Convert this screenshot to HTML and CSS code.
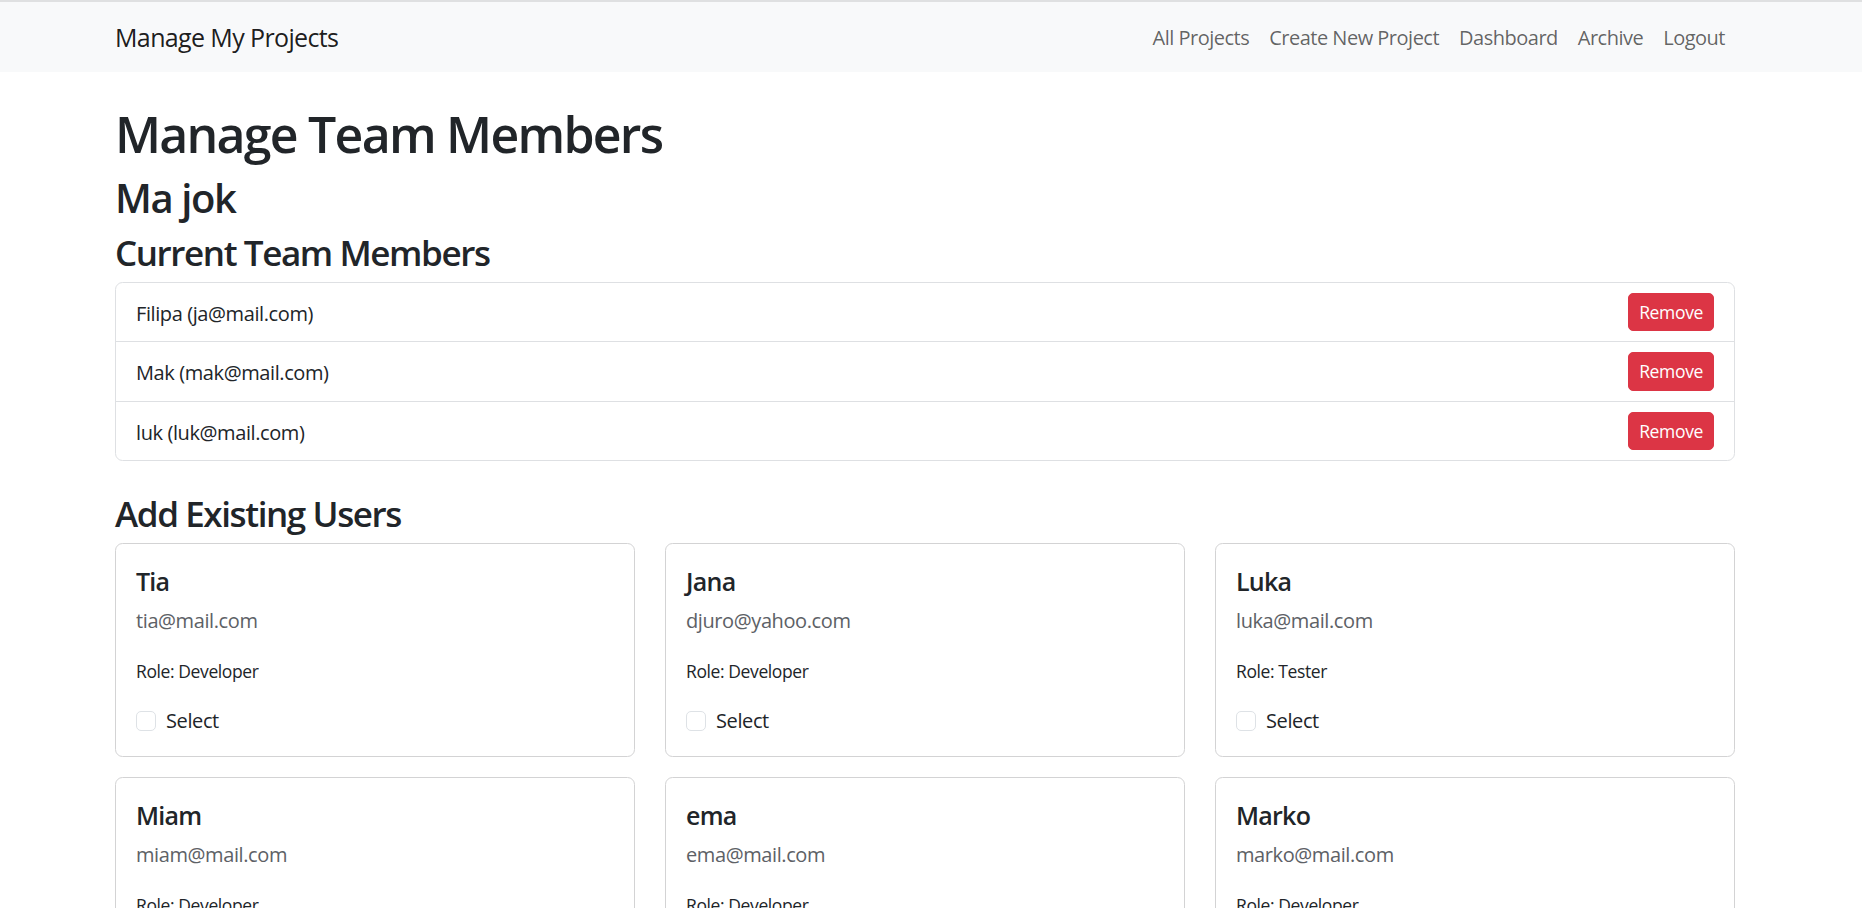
FILE: index.html
```html
<!DOCTYPE html>
<html lang="en">
<head>
<meta charset="utf-8">
<title>Manage Team Members</title>
<link rel="stylesheet" href="styles.css">
</head>
<body>
<nav class="navbar">
  <div class="nav-inner">
    <a class="brand" href="#">Manage My Projects</a>
    <ul class="nav-links">
      <li><a href="#">All Projects</a></li>
      <li><a href="#">Create New Project</a></li>
      <li><a href="#">Dashboard</a></li>
      <li><a href="#">Archive</a></li>
      <li><a href="#">Logout</a></li>
    </ul>
  </div>
</nav>
<main class="page">
  <h1 class="title">Manage Team Members</h1>
  <h2 class="project">Ma jok</h2>
  <h3 class="section">Current Team Members</h3>
  <ul class="members">
    <li class="member"><span>Filipa (ja@mail.com)</span><button class="btn-remove">Remove</button></li>
    <li class="member"><span>Mak (mak@mail.com)</span><button class="btn-remove">Remove</button></li>
    <li class="member"><span>luk (luk@mail.com)</span><button class="btn-remove">Remove</button></li>
  </ul>
  <h3 class="section">Add Existing Users</h3>
  <div class="users">
    <div class="card">
      <h5 class="card-title">Tia</h5>
      <p class="card-email">tia@mail.com</p>
      <p class="card-role"><small>Role: Developer</small></p>
      <div class="check"><input type="checkbox" id="u1"><label for="u1">Select</label></div>
    </div>
    <div class="card">
      <h5 class="card-title">Jana</h5>
      <p class="card-email">djuro@yahoo.com</p>
      <p class="card-role"><small>Role: Developer</small></p>
      <div class="check"><input type="checkbox" id="u2"><label for="u2">Select</label></div>
    </div>
    <div class="card">
      <h5 class="card-title">Luka</h5>
      <p class="card-email">luka@mail.com</p>
      <p class="card-role"><small>Role: Tester</small></p>
      <div class="check"><input type="checkbox" id="u3"><label for="u3">Select</label></div>
    </div>
    <div class="card">
      <h5 class="card-title">Miam</h5>
      <p class="card-email">miam@mail.com</p>
      <p class="card-role"><small>Role: Developer</small></p>
      <div class="check"><input type="checkbox" id="u4"><label for="u4">Select</label></div>
    </div>
    <div class="card">
      <h5 class="card-title">ema</h5>
      <p class="card-email">ema@mail.com</p>
      <p class="card-role"><small>Role: Developer</small></p>
      <div class="check"><input type="checkbox" id="u5"><label for="u5">Select</label></div>
    </div>
    <div class="card">
      <h5 class="card-title">Marko</h5>
      <p class="card-email">marko@mail.com</p>
      <p class="card-role"><small>Role: Developer</small></p>
      <div class="check"><input type="checkbox" id="u6"><label for="u6">Select</label></div>
    </div>
  </div>
</main>
</body>
</html>
```
FILE: styles.css
```css
* { box-sizing: border-box; }
html, body { margin: 0; padding: 0; }
body {
  font-family: "Open Sans", "Liberation Sans", sans-serif;
  font-size: 20px;
  line-height: 1.5;
  letter-spacing: -0.02em;
  color: #212529;
  background: #fff;
  border-top: 2px solid #dfe0e1;
}
.navbar {
  background: #f8f9fa;
  padding: 11px 0 9px;
}
.nav-inner {
  width: 1620px;
  margin-left: 115px;
  display: flex;
  align-items: center;
}
.brand {
  font-size: 25px;
  line-height: 37.5px;
  padding: 6.25px 0;
  letter-spacing: -0.025em;
  color: rgba(0, 0, 0, 0.9);
  text-decoration: none;
  margin-right: 20px;
}
.nav-links {
  list-style: none;
  margin: 0 0 0 auto;
  padding: 0;
  display: flex;
}
.nav-links a {
  display: block;
  padding: 10px 10px;
  line-height: 30px;
  letter-spacing: -0.025em;
  color: rgba(0, 0, 0, 0.62);
  text-decoration: none;
}
.page {
  width: 1620px;
  margin-left: 115px;
  padding-top: 30px;
}
.title, .project, .section {
  margin: 0 0 8px;
  padding-top: 2px;
  font-weight: 600;
  line-height: 1.2;
  letter-spacing: -0.035em;
}
.title { font-size: 50px; }
.project { font-size: 40px; }
.section { font-size: 35px; letter-spacing: -0.04em; }
.members {
  list-style: none;
  margin: 0 0 30px;
  padding: 0;
  border: 1px solid #dee0e3;
  border-radius: 7.5px;
}
.member {
  display: flex;
  justify-content: space-between;
  align-items: center;
  padding: 10px 20px;
  border-bottom: 1px solid #dee0e3;
}
.member span { position: relative; top: 2px; }
.member:last-child { border-bottom: 0; }
.btn-remove {
  font-family: inherit;
  font-size: 17.5px;
  letter-spacing: -0.02em;
  line-height: 1.5;
  padding: 5px 10px;
  color: #fff;
  background: #dc3545;
  border: 1px solid #dc3545;
  border-radius: 5px;
}
.users {
  display: grid;
  grid-template-columns: repeat(3, 1fr);
  column-gap: 30px;
  row-gap: 20px;
}
.card {
  border: 1px solid #d3d3d4;
  border-radius: 7.5px;
  padding: 22px 20px 18px;
}
.card-title {
  font-size: 25px;
  font-weight: 600;
  letter-spacing: -0.03em;
  line-height: 1.2;
  margin: 0 0 10px;
}
.card-email {
  margin: 0 0 20px;
  color: #5d6166;
}
.card-role { margin: 0 0 20px; }
.card-role small { font-size: 17.5px; }
.check {
  min-height: 30px;
  padding-left: 30px;
  margin-bottom: 2.5px;
}
.check input {
  appearance: none;
  -webkit-appearance: none;
  width: 20px;
  height: 20px;
  margin: 5px 0 0 -30px;
  float: left;
  border: 1px solid #dee2e6;
  border-radius: 5px;
  background: #fff;
}
.check label { color: #212529; }
```
